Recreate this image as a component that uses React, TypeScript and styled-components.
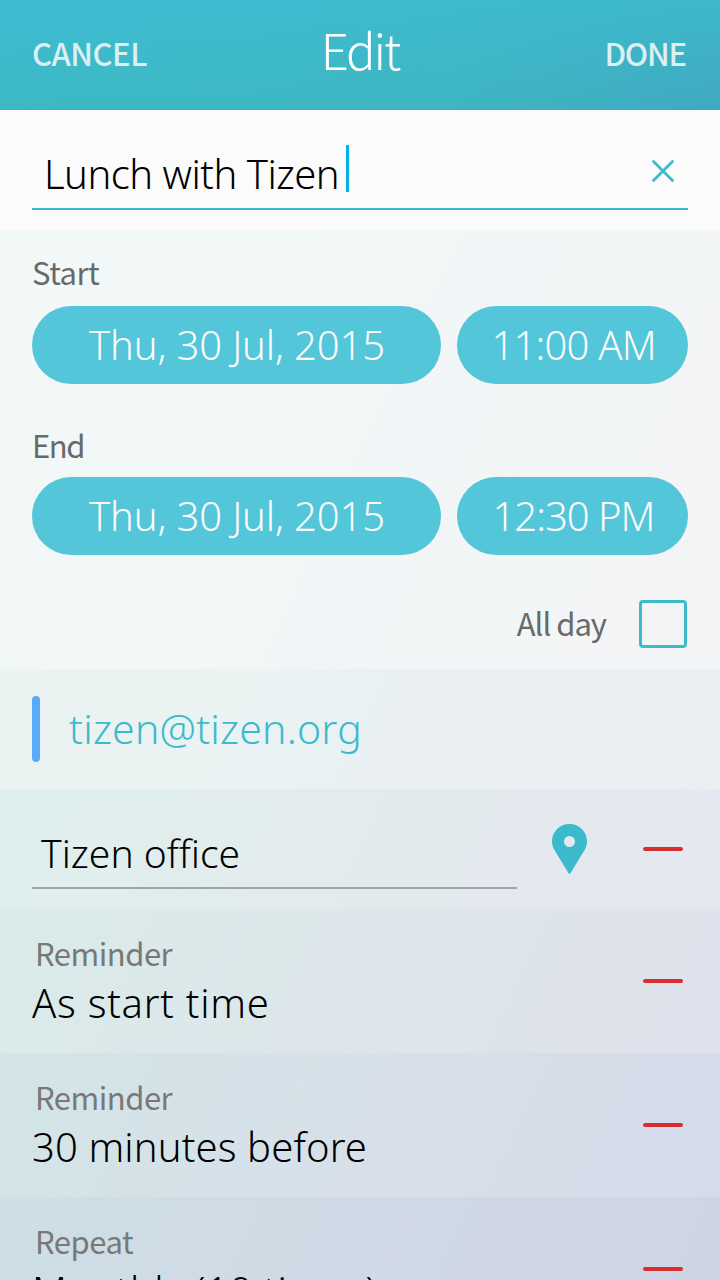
import React from "react";
import styled, { createGlobalStyle } from "styled-components";

const GlobalStyle = createGlobalStyle`
  * { box-sizing: border-box; }
  body { margin: 0; }
  button, input { font: inherit; }
`;

const Screen = styled.main`
  width: 720px;
  height: 1280px;
  overflow: hidden;
  display: flex;
  flex-direction: column;
  font-family: "Noto Sans", "Open Sans", sans-serif;
  color: #000;
`;

const Text = styled.span<{ $size?: number; $weight?: number; $track?: number }>`
  display: block;
  white-space: nowrap;
  font-size: ${(p) => p.$size ?? 40}px;
  font-weight: ${(p) => p.$weight ?? 300};
  letter-spacing: ${(p) => p.$track ?? 0}px;
  margin-right: ${(p) => -(p.$track ?? 0)}px;
  line-height: 48px;
`;

const Label = styled(Text)`
  padding-bottom: 4px;
  line-height: 44px;
  font-family: "Noto Sans CJK SC", "Noto Sans", sans-serif;
`;

const Header = styled.header`
  flex: none;
  height: 110px;
  padding: 0 33px 0 32px;
  display: grid;
  grid-template-columns: 1fr auto 1fr;
  align-items: center;
  background: linear-gradient(176deg, #3ebbcf 15%, rgba(62, 187, 207, 0) 100%),
    linear-gradient(90deg, #3cb8bc, #3eb5bf 60%, #40a9bf);
  color: #fff;
`;

const HeaderAction = styled.button<{ $end?: boolean }>`
  justify-self: ${(p) => (p.$end ? "end" : "start")};
  margin-top: -1px;
  border: 0;
  padding: 0;
  background: none;
  color: #dceff2;
`;

const HeaderTitle = styled.h1`
  margin: -9px 0 0 3px;
`;

const Band = styled.section<{ $height: number; $from: string; $mid: string; $to: string }>`
  flex: none;
  height: ${(p) => p.$height}px;
  display: flex;
  align-items: center;
  background: linear-gradient(115deg, ${(p) => p.$from}, ${(p) => p.$mid} 50%, ${(p) => p.$to});
`;

const TitleBand = styled.section`
  flex: none;
  height: 120px;
  padding: 0 32px;
  background: #fbfbfb;
`;

const Field = styled.div<{ $accent?: boolean }>`
  width: ${(p) => (p.$accent ? 656 : 485)}px;
  height: 100px;
  display: flex;
  align-items: flex-start;
  justify-content: space-between;
  padding: ${(p) => (p.$accent ? "35px 12px 0 12px" : "40px 0 0 9px")};
  border-bottom: 2px solid ${(p) => (p.$accent ? "#3db9cc" : "#a0a5a7")};
`;

const Entry = styled.div`
  display: flex;
`;

const Caret = styled.i`
  width: 3px;
  height: 47px;
  margin-left: 6px;
  background: #00b4e4;
`;

const EntryText = styled(Text)`
  margin-top: 5px;
`;

const ClearIcon = styled.svg`
  width: 26px;
  height: 26px;
  margin-top: 13px;
`;

const Schedule = styled.section`
  flex: none;
  height: 439px;
  padding: 20px 32px 0;
  background: linear-gradient(115deg, #f2f9f8, #f2f6f7 50%, #f3f4f6);
  color: #686a6a;
`;

const TimeGroup = styled.div<{ $gap: number; $after: number }>`
  display: flex;
  flex-direction: column;
  gap: ${(p) => p.$gap}px;
  margin-bottom: ${(p) => p.$after}px;
`;

const PillRow = styled.div`
  display: grid;
  grid-template-columns: 409px 231px;
  gap: 16px;
`;

const Pill = styled.button`
  height: 78px;
  border: 0;
  border-radius: 39px;
  padding: 0 0 0 1px;
  display: flex;
  align-items: center;
  justify-content: center;
  background: #53c6da;
  color: #fafafa;
`;

const TimePill = styled(Pill)`
  padding-left: 3px;
`;

const AllDay = styled.label`
  display: flex;
  align-items: flex-start;
  justify-content: flex-end;
  gap: 32px;
  padding-right: 1px;
`;

const AllDayText = styled(Label)`
  padding-top: 1px;
`;

const Checkbox = styled.span`
  width: 48px;
  height: 48px;
  border: 3px solid #3db9cc;
  border-radius: 4px;
`;

const AccountBar = styled.i`
  width: 8px;
  height: 66px;
  margin: 0 29px 0 32px;
  border-radius: 4px;
  background: #5aaafa;
`;

const Account = styled(Text)`
  padding-bottom: 2px;
  color: #3db9cc;
`;

const PlaceField = styled.div`
  height: 120px;
  margin-left: 32px;
`;

const PinIcon = styled.svg`
  width: 36px;
  height: 51px;
  margin-left: 35px;
`;

const Remove = styled.button`
  width: 40px;
  height: 4px;
  margin-left: auto;
  margin-right: 37px;
  border: 0;
  border-radius: 2px;
  padding: 0;
  background: #d72f2f;
`;

const Detail = styled.div`
  padding: 0 0 4px 32px;
`;

const Caption = styled(Label)`
  padding-left: 3px;
  color: #787878;
`;

const details = [
  { label: "Reminder", value: "As start time", track: 0.75, colors: ["#daebe9", "#dde6eb", "#dfe1ec"] },
  { label: "Reminder", value: "30 minutes before", track: 0.13, colors: ["#d2e5e7", "#d7e0e9", "#d6dbe9"] },
  { label: "Repeat", value: "Monthly (10 times)", track: 0.5, colors: ["#cedfe5", "#d0d9e6", "#cfd4e5"] },
];

export default function App() {
  return (
    <Screen>
      <GlobalStyle />
      <Header>
        <HeaderAction><Label $size={31} $weight={500} $track={-0.5}>CANCEL</Label></HeaderAction>
        <HeaderTitle><Label $size={49} $track={-2.2}>Edit</Label></HeaderTitle>
        <HeaderAction $end><Label $size={31} $weight={500} $track={-1.3}>DONE</Label></HeaderAction>
      </Header>

      <TitleBand>
        <Field $accent>
          <Entry>
            <EntryText $track={-0.5}>Lunch with Tizen</EntryText>
            <Caret />
          </Entry>
          <ClearIcon viewBox="0 0 26 26" fill="none" stroke="#3db9cc" strokeWidth="2.8" strokeLinecap="round">
            <path d="M3.5 3.5 22.5 22.5M22.5 3.5 3.5 22.5" />
          </ClearIcon>
        </Field>
      </TitleBand>

      <Schedule>
        <TimeGroup $gap={8} $after={39}>
          <Label $size={31} $weight={400} $track={-0.5}>Start</Label>
          <PillRow>
            <Pill><Text $track={-0.15}>Thu, 30 Jul, 2015</Text></Pill>
            <TimePill><Text $track={-0.8}>11:00 AM</Text></TimePill>
          </PillRow>
        </TimeGroup>
        <TimeGroup $gap={6} $after={45}>
          <Label $size={31} $weight={400} $track={-1.5}>End</Label>
          <PillRow>
            <Pill><Text $track={-0.15}>Thu, 30 Jul, 2015</Text></Pill>
            <TimePill><Text $track={-1}>12:30 PM</Text></TimePill>
          </PillRow>
        </TimeGroup>
        <AllDay>
          <AllDayText $size={31} $weight={400} $track={-1}>All day</AllDayText>
          <Checkbox />
        </AllDay>
      </Schedule>

      <Band $height={120} $from="#eaf4f1" $mid="#eaf1f3" $to="#ebedf1">
        <AccountBar />
        <Account $size={41} $track={0.2}>tizen@tizen.org</Account>
      </Band>

      <Band $height={120} $from="#dff0ed" $mid="#e3ebed" $to="#e4e7f0">
        <PlaceField>
          <Field><Text $size={39}>Tizen office</Text></Field>
        </PlaceField>
        <PinIcon viewBox="0 0 36 51">
          <path
            fill="#3db9cc"
            fillRule="evenodd"
            d="M17.5 0C7.8 0 0 7.8 0 17.3c0 3.5 1 6.2 2.4 8.6L16.6 49.3q.9 1.3 1.8 0L32.6 25.9c1.4-2.4 2.4-5.1 2.4-8.6C35 7.8 27.2 0 17.5 0Zm0 12a5.5 5.5 0 1 1 0 11 5.5 5.5 0 0 1 0-11Z"
          />
        </PinIcon>
        <Remove aria-label="Remove location" />
      </Band>

      {details.map((d) => (
        <Band key={d.value} $height={144} $from={d.colors[0]} $mid={d.colors[1]} $to={d.colors[2]}>
          <Detail>
            <Caption $size={31} $weight={400} $track={-0.5}>{d.label}</Caption>
            <Text $track={d.track}>{d.value}</Text>
          </Detail>
          <Remove aria-label={`Remove ${d.label}`} />
        </Band>
      ))}
    </Screen>
  );
}
